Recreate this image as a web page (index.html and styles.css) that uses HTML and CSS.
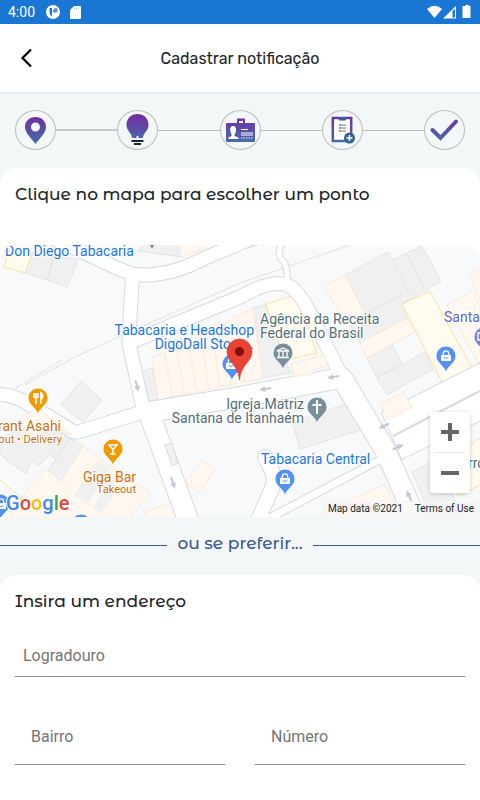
FILE: index.html
```
<!DOCTYPE html>
<html lang="pt-BR">
<head>
  <meta charset="UTF-8">
  <meta name="viewport" content="width=device-width, initial-scale=1.0">
  <title>Cadastrar notificação</title>
  <link rel="stylesheet" href="styles.css">
</head>
<body>
  <div class="statusbar">
    <span class="time">4:00</span>
    <svg class="status-app" width="14" height="14" viewBox="0 0 14 14"><circle cx="7" cy="7" r="7" fill="#fff"/><path d="M3.500 3H6v8.500Q3.500 10 3.500 7z" fill="#1976d2"/><path d="M7 3h2.500a2.300 2.300 0 0 1 0 4.600H7z" fill="#4a92dc"/><path d="M7 3h1.500v1.500H7z" fill="#fff"/></svg>
    <svg class="status-sd" width="11" height="14" viewBox="0 0 11 14"><path d="M4 1h6q1 0 1 1v11q0 1-1 1H1q-1 0-1-1V5z" fill="#fff"/><path d="M4.500 2.500v2M6.500 2.500v2M8.500 2.500v2" stroke="#b5d2f0"/></svg>
    <svg class="status-right" width="45" height="14" viewBox="0 0 45 14">
      <path d="M0 4q7.500-6.500 15 0L7.500 13z" fill="#fff"/>
      <path d="M29 1v12.500H16z" fill="#fff"/><path d="M25.500 6v6.500h2.500V4z" fill="#1976d2"/>
      <path d="M38 0h4v1h1.500v12h-8V1H38z" fill="#fff"/>
    </svg>
  </div>

  <header class="topbar">
    <button class="back" aria-label="Voltar">
      <svg width="14" height="20" viewBox="0 0 14 20"><path d="M11 1.500L2.500 10l8.500 8.500" fill="none" stroke="#000" stroke-width="2.200"/></svg>
    </button>
    <h1>Cadastrar notificação</h1>
  </header>

  <!-- Etapas do cadastro -->
  <div class="steps">
    <svg width="0" height="0" class="defs">
      <defs><linearGradient id="roxo" x1="0" y1="0" x2="0" y2="41" gradientUnits="userSpaceOnUse"><stop offset=".15" stop-color="#7030a4"/><stop offset=".8" stop-color="#4271aa"/></linearGradient></defs>
    </svg>
    <div class="step">
      <svg width="39" height="38" viewBox="0 0 39 38"><path fill="url(#roxo)" fill-rule="evenodd" d="M19.500 6C13 6 9 10.500 9 16c0 6 6 11 10.500 17C24 27 30 22 30 16c0-5.500-4-10-10.500-10zm0 5.500a4.500 4.500 0 1 1 0 9 4.500 4.500 0 0 1 0-9z"/></svg>
    </div>
    <span class="line thick"></span>
    <div class="step">
      <svg width="39" height="38" viewBox="0 0 39 38"><path fill="url(#roxo)" d="M19.500 3c-6.500 0-11 4.500-11 11 0 5 3.500 7 5 10.500.4 1 .5 2.500 1 2.500h4v-2h2v2h4c.5 0 .6-1.500 1-2.500 1.500-3.500 5-5.500 5-10.500 0-6.500-4.500-11-11-11z"/><path d="M13.500 30h12M16 33h7" stroke="#12283d" stroke-width="2"/></svg>
    </div>
    <span class="line"></span>
    <div class="step">
      <svg width="39" height="38" viewBox="0 0 39 38"><path fill="url(#roxo)" d="M6 12h27q1 0 1 1v17q0 1-1 1H6q-1 0-1-1V13q0-1 1-1z"/><path fill="url(#roxo)" d="M16 7.500h8V15h-8z"/><path d="M18 10h4v2h-4z" fill="#fff"/><path d="M12 15q3.500 0 3 5-.5 3-1.500 3.500V25l4 1.500V28h-10v-1.500l3-1.500v-1.500Q7 15 12 15z" fill="#fff"/><path d="M20 18.500h7M20 22h12M20 24h12" stroke="#fff"/><path d="M20 27h12" stroke="#fff" stroke-dasharray="1.500 1"/></svg>
    </div>
    <span class="line"></span>
    <div class="step">
      <svg width="39" height="38" viewBox="0 0 39 38"><path d="M9.800 7h18.400v23H9.800z" fill="#fff" stroke="url(#roxo)" stroke-width="2.500"/><path d="M16 6h7v3.500h-7z" fill="#2f678d"/><path d="M16 14h2M16 17h2M16 20h2" stroke="#333"/><path d="M18 14h5M18 17h5M18 20h5" stroke="#777"/><circle cx="26.500" cy="27" r="5.500" fill="#2f678d"/><path d="M23.500 27h6M26.500 24v6" stroke="#fff" stroke-width="1.600"/></svg>
    </div>
    <span class="line"></span>
    <div class="step">
      <svg width="39" height="38" viewBox="0 0 39 38"><path d="M7.500 19l8 8L31 10.500" fill="none" stroke="url(#roxo)" stroke-width="4" stroke-linecap="round"/></svg>
    </div>
  </div>

  <main>
    <section class="card">
      <h2>Clique no mapa para escolher um ponto</h2>
      <div class="map">
        <svg class="map-canvas" viewBox="0 0 480 272" preserveAspectRatio="xMidYMid slice">
          <defs>
            <path id="pin" d="M0 17C-1 10-10 7-10 0a10 10 0 0 1 20 0C10 7 1 10 0 17z"/>
            <g id="bag" fill="none" stroke-linecap="round">
              <path d="M-5-1H5V5H-5z" fill="#fff"/>
              <path d="M-2.700-1v-1.500a2.700 2.700 0 0 1 5.400 0V-1" stroke="#fff" stroke-width="1.300"/>
              <path d="M-2 1.500q2 2.500 4 0" stroke="#5491f5"/>
            </g>
            <path id="arrow" d="M-6 0L0-3v2h6v2H0v2z"/>
            <g id="roads" fill="none" stroke-linejoin="round">
              <path d="M50-8L85 8Q120 25 132 29Q165 34 205 13L255-8" />
              <path d="M133 30Q130 60 129 98L144 168" />
              <path d="M129 98L240 52Q275 32 291 42Q300 48 311 70L340 128" />
              <path d="M-5 149Q14 149 30 160L72 186Q76 188 82 186L145 166" />
            </g>
            <g id="avenues" fill="none" stroke-linejoin="round" stroke-linecap="round">
              <path d="M149 168L190 280" />
              <path d="M149 167L240 152L340 133" />
              <path d="M342 133L385 205L421 285" />
            </g>
            <path id="wide" d="M382 168L485 116V173L402 214z"/>
            <path id="lane" fill="none" d="M262 277L385 212"/>
            <path id="alley" fill="none" d="M282-5L279 8Q279 13 284 17Q288 23 287 37"/>
            <g id="culdesac" fill="none"><path d="M265 212L270 222Q276 231 272 243L256 280"/><path d="M265 212h.1" stroke-linecap="round"/></g>
          </defs>

          <rect width="480" height="272" fill="#f8f9fb"/>

          <path d="M25 140L75 112L123 90L240 38L350 0M240 5L258 0M0 153L62 115" fill="none" stroke="#dfe1e3"/>

          <!-- quadras e construções -->
          <g fill="#f0f0f1" stroke="#e2e4e6">
            <path d="M25 28L32 8L55 8L47 35zM47 35L55 8L78 15L67 42z"/>
            <path d="M137 6L148-3L178-2L182 12z"/>
            <path d="M140 127L152 123L158 154L147 157zM253 63L266 59L290 128L263 133z"/>
            <path d="M345 30L388 7L393 15L407 8L422 1L441 36L402 59L407 73L360 98L350 78L365 68zM393 15L409 49M407 8L424 44M365 68L402 50"/>
            <path d="M367 113L392 100L402 118L377 132zM377 133L425 107L433 124L387 150z"/>
            <path d="M292 177L352 157L361 185L300 204z"/>
            <path d="M412 227L435 215L465 275L432 275z"/>
            <path d="M61 160L81 136L102 155L83 177z"/>
            <path d="M0 194L36 177L72 193L57 214L50 210L39 220L32 216L26 229L0 210z"/>
            <path d="M48 225L70 193L83 201L61 236z"/>
          </g>
          <g fill="#fff7f0" stroke="#fde8d6">
            <path d="M178-2L203-2L201 5L182 12z"/>
            <path d="M152 113L253 63L263 133L158 155z"/>
            <path d="M324 41L345 30L367 72L348 82z"/>
            <path d="M360 98L407 73L415 87L367 113zM447 60L472 46L500 100L478 118zM469 30L485 22V65z"/>
            <path d="M320 268L385 239L402 275H320z"/>
            <path d="M185 237L202 215L215 225L199 248zM145 268L170 257L178 275H145z"/>
            <path d="M22 252L45 223L61 236L83 201L150 248L128 275H10z"/>
            <path d="M75 250L98 215M82 256L107 222M95 264L118 229M61 236L108 275" fill="none"/>
            <path d="M164 107L173 152M176 101L185 150M188 95L197 148M200 89L209 145M212 83L220 143M224 77L231 141M237 71L245 138" fill="none"/>
          </g>
          <path d="M75 250L98 216L111 223L88 258zM93 261L110 236L120 243L100 268z" fill="#f0f0f1"/>
          <g fill="#fffbee" stroke="#fde0a3">
            <path d="M4 22L10 2L32 8L25 28z"/>
            <path d="M266 59L295 50L317 108L284 115z"/>
            <path d="M402 59L430 46L473 125L444 141z"/>
            <path d="M476 195L490 190V235L458 251L450 225z"/>
            <path d="M0 235L22 253L10 268" fill="none"/>
          </g>

          <!-- ruas: contorno e depois o asfalto branco -->
          <g stroke="#d8dadd">
            <use href="#lane" stroke-width="9"/><use href="#alley" stroke-width="7"/><use href="#culdesac" stroke-width="16"/>
            <use href="#wide" stroke-width="2"/><use href="#roads" stroke-width="15"/><use href="#avenues" stroke-width="22"/>
          </g>
          <g stroke="#fff">
            <use href="#lane" stroke-width="7"/><use href="#alley" stroke-width="5"/><use href="#culdesac" stroke-width="14"/>
            <use href="#wide" fill="#fff" stroke-width="0"/><use href="#roads" stroke-width="13"/><use href="#avenues" stroke-width="20"/>
          </g>
          <path d="M393 191L480 146" stroke="#d8dadd" stroke-width="2"/>
          <!-- casas que avançam sobre a rua -->
          <g fill="#fff7f0" stroke="#fde8d6">
            <path d="M380 159L403 147L412 162L388 175z"/>
            <path d="M15 178L37 162L72 190L50 185L33 195z"/>
            <path d="M291 119L325 110L327 121L313 125V129L293 132z"/>
          </g>
          <path d="M165 200L172 198L178 218L172 221z" fill="#f0f0f1" stroke="#d8dadd"/>
          <g fill="#c3c7d9">
            <use href="#arrow" transform="translate(137 141) rotate(-105)"/>
            <use href="#arrow" transform="translate(173 238) rotate(-110)"/>
            <use href="#arrow" transform="translate(265 144) rotate(-10)"/>
            <use href="#arrow" transform="translate(333 132) rotate(-10)"/>
            <use href="#arrow" transform="translate(384 181) rotate(-25)"/>
            <use href="#arrow" transform="translate(398 202) rotate(155)"/>
            <use href="#arrow" transform="translate(409 251) rotate(65)"/>
          </g>

          <!-- pinos dos locais -->
          <g stroke="#fff" stroke-width=".8">
            <use href="#pin" x="152" y="-11" fill="#78909c"/>
            <use href="#pin" x="232" y="119" fill="#5491f5"/>
            <use href="#pin" x="285" y="234" fill="#5491f5"/>
            <use href="#pin" x="446" y="111" fill="#5491f5"/>
            <use href="#pin" x="283" y="108" fill="#78909c"/>
            <use href="#pin" x="317" y="162" fill="#78909c"/>
            <use href="#pin" x="38" y="153" fill="#f29900"/>
            <use href="#pin" x="113" y="204" fill="#f29900"/>
            <use href="#pin" x="0" y="259" fill="#5491f5"/>
            <use href="#pin" x="81" y="279" fill="#5491f5"/>
            <use href="#pin" x="484" y="92" fill="#7b83cf"/>
          </g>
          <use href="#bag" x="231" y="119"/>
          <use href="#bag" x="285" y="234"/>
          <use href="#bag" x="446" y="111"/>
          <use href="#bag" x="1" y="259"/>
          <g fill="none" stroke="#fff" stroke-width="1.300">
            <path d="M277 106l6-3 6 3zM279 107v5M283 107v5M287 107v5M277 112.500h12"/>
            <path d="M317 155v14M312.500 160h9" stroke-width="2"/>
            <path d="M34 148v4q2 2 4 0v-4M36 148v11M41 159v-11q3 2 1 6" stroke-width="1.600"/>
            <path d="M109 200h8l-4 4.500zM113 204v5M110 209h6" stroke-width="1.500"/>
            <path d="M478 88h6v7h-6z"/>
          </g>

          <!-- nomes -->
          <g class="labels">
            <g class="shop">
              <text x="5" y="11">Don Diego Tabacaria</text>
              <text x="254" y="90" text-anchor="end">Tabacaria e Headshop</text>
              <text x="254" y="104" text-anchor="end">DigoDall Store...</text>
              <text x="261" y="219">Tabacaria Central</text>
            </g>
            <g class="place">
              <text x="260" y="79">Agência da Receita</text>
              <text x="260" y="93">Federal do Brasil</text>
              <text x="304" y="164" text-anchor="end">Igreja.Matriz</text>
              <text x="304" y="178" text-anchor="end">Santana de Itanhaém</text>
              <text x="468" y="223">rro</text>
            </g>
            <g class="food">
              <text x="61" y="186" text-anchor="end">rant Asahi</text>
              <text class="small" x="62" y="198" text-anchor="end">out • Delivery</text>
              <text x="136" y="237" text-anchor="end">Giga Bar</text>
              <text class="small" x="136" y="248" text-anchor="end">Takeout</text>
            </g>
            <text class="hotel" x="444" y="77">Santa</text>
          </g>

          <!-- ponto escolhido -->
          <path d="M239.500 135C238 119 227 117 227 106.500a12.500 12.500 0 0 1 25 0C252 117 241 119 239.500 135z" fill="#ea4335" stroke="#d33a2e" stroke-width=".6"/>
          <circle cx="239.500" cy="106.500" r="4.500" fill="#7d120c"/>

          <text class="logo" x="6" y="265"><tspan fill="#4285f4">G</tspan><tspan fill="#ea4335">o</tspan><tspan fill="#fbbc05">o</tspan><tspan fill="#4285f4">g</tspan><tspan fill="#34a853">l</tspan><tspan fill="#ea4335">e</tspan></text>
        </svg>
        <div class="zoom">
          <button aria-label="Aumentar zoom"><svg width="18" height="18" viewBox="0 0 18 18"><path d="M0 9h18M9 0v18" stroke="#666" stroke-width="4"/></svg></button>
          <button aria-label="Diminuir zoom"><svg width="18" height="18" viewBox="0 0 18 18"><path d="M0 9h18" stroke="#666" stroke-width="4"/></svg></button>
        </div>
        <div class="credits">
          <span>Map data ©2021</span>
          <a href="#">Terms of Use</a>
        </div>
      </div>
    </section>

    <div class="divider">ou se preferir...</div>

    <section class="card">
      <h2>Insira um endereço</h2>
      <form class="address">
        <input class="field street" type="text" placeholder="Logradouro" aria-label="Logradouro">
        <div class="row">
          <input class="field" type="text" placeholder="Bairro" aria-label="Bairro">
          <input class="field" type="text" placeholder="Número" aria-label="Número">
        </div>
      </form>
    </section>
  </main>
</body>
</html>
```
FILE: styles.css
```
* {
  box-sizing: border-box;
}
body {
  margin: 0;
  min-height: 100vh;
  display: flex;
  flex-direction: column;
  background: #f3f7f8;
  color: #212529;
  font-family: Roboto, sans-serif;
}
button {
  padding: 0;
  border: none;
  background: none;
  cursor: pointer;
}
.statusbar {
  height: 24px;
  padding: 0 8px;
  display: flex;
  align-items: center;
  background: #1976d2;
  color: #fff;
  font-size: 14px;
}
.status-app {
  margin-left: 11px;
}
.status-sd {
  margin-left: 10px;
}
.status-right {
  margin-left: auto;
}
.topbar {
  height: 70px;
  padding: 0 20px;
  display: grid;
  grid-template-columns: 24px 1fr 24px;
  align-items: center;
  background: #fff;
  border-bottom: 2px solid #e9ecef;
}
.back {
  display: flex;
}
.topbar h1 {
  margin: 0;
  text-align: center;
  font-family: Rubik, Roboto, sans-serif;
  font-size: 16px;
  font-weight: 400;
}
.steps {
  display: flex;
  align-items: center;
  padding: 16px 15px 18px;
}
.defs {
  position: absolute;
}
.step {
  width: 41px;
  height: 40px;
  border: 1px solid #bdbdbd;
  border-radius: 50%;
}
.step svg {
  display: block;
}
.line {
  flex: 1;
  height: 1px;
  background: #bdbdbd;
}
.line.thick {
  height: 2px;
  background: #c8c8c8;
}
main {
  flex: 1;
  display: flex;
  flex-direction: column;
}
.card {
  background: #fff;
  border-radius: 16px 16px 0 0;
}
.card:last-child {
  flex: 1;
}
h2,
.divider {
  font-family: "Montserrat Alternates", Montserrat, Inter, sans-serif;
  font-size: 17px;
  line-height: 22px;
  font-weight: 500;
}
h2 {
  margin: 0;
  padding: 15px 15px 0;
}
.map {
  position: relative;
  margin-top: 40px;
  height: 272px;
  border-radius: 16px 16px 0 0;
  overflow: hidden;
}
.map-canvas {
  display: block;
  width: 100%;
  height: 100%;
}
.labels text {
  font-size: 14px;
  stroke: #fff;
  stroke-width: 2px;
  stroke-linejoin: round;
  paint-order: stroke;
}
.labels .small {
  font-size: 11px;
}
.shop {
  fill: #1a73e8;
}
.place {
  fill: #546e7a;
}
.food {
  fill: #d06d08;
}
.hotel {
  fill: #5b64bd;
}
.logo {
  font-size: 20px;
  font-weight: 500;
  stroke: #fff;
  stroke-width: 2px;
  paint-order: stroke;
}
.zoom {
  position: absolute;
  right: 10px;
  bottom: 24px;
  width: 40px;
  padding: 0 5px;
  background: #fff;
  border-radius: 2px;
  box-shadow: 0 1px 4px rgba(0, 0, 0, 0.2);
}
.zoom button {
  width: 100%;
  height: 40px;
  display: flex;
  align-items: center;
  justify-content: center;
}
.zoom button + button {
  height: 41px;
  border-top: 1px solid #e6e6e6;
}
.credits {
  position: absolute;
  right: 0;
  bottom: 0;
  display: flex;
  font-size: 10px;
  line-height: 16px;
}
.credits span,
.credits a {
  padding: 0 6px;
  background: rgba(245, 245, 245, 0.8);
  color: #222;
  text-decoration: none;
}
.divider {
  display: flex;
  align-items: center;
  gap: 10px;
  padding: 15px 0 21px;
  color: #3c5a94;
}
.divider::before,
.divider::after {
  content: "";
  flex: 1;
  height: 1px;
  margin-top: 4px;
  background: #3c5a94;
}
.address {
  padding: 0 15px;
}
.field {
  display: block;
  width: 100%;
  height: 56px;
  padding: 0 16px;
  border: none;
  border-bottom: 1px solid #8e8e8e;
  border-radius: 0;
  background: transparent;
  outline: none;
  font-family: Roboto, sans-serif;
  font-size: 16px;
  color: #212529;
}
.field::placeholder {
  color: #757575;
  opacity: 1;
}
.field.street {
  height: 42px;
  margin-top: 23px;
  padding: 0 8px;
}
.row {
  display: grid;
  grid-template-columns: 1fr 1fr;
  gap: 30px;
  margin-top: 32px;
}
```
